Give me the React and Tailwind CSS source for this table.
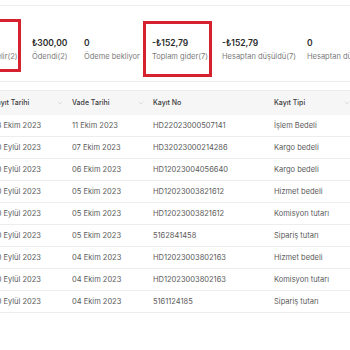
import React from "react";
import { ChevronDown } from "lucide-react";

const stats = [
  { v: "₺300,00", l: "Toplam gelir(2)" },
  { v: "₺300,00", l: "Ödendi(2)" },
  { v: "0", l: "Ödeme bekliyor" },
  { v: "-₺152,79", l: "Toplam gider(7)" },
  { v: "-₺152,79", l: "Hesaptan düşüldü(7)" },
  { v: "0", l: "Hesaptan düşülecek(0)" },
];

const rows = [
  ["08 Ekim 2023", "11 Ekim 2023", "HD22023000507141", "İşlem Bedeli"],
  ["30 Eylül 2023", "07 Ekim 2023", "HD32023000214286", "Kargo bedeli"],
  ["30 Eylül 2023", "06 Ekim 2023", "HD12023004056640", "Kargo bedeli"],
  ["30 Eylül 2023", "05 Ekim 2023", "HD12023003821612", "Hizmet bedeli"],
  ["30 Eylül 2023", "05 Ekim 2023", "HD12023003821612", "Komisyon tutarı"],
  ["30 Eylül 2023", "05 Ekim 2023", "5162841458", "Sipariş tutarı"],
  ["30 Eylül 2023", "04 Ekim 2023", "HD12023003802163", "Hizmet bedeli"],
  ["30 Eylül 2023", "04 Ekim 2023", "HD12023003802163", "Komisyon tutarı"],
  ["30 Eylül 2023", "04 Ekim 2023", "5161124185", "Sipariş tutarı"],
];

const headers = [
  { t: "Kayıt Tarihi", c: true },
  { t: "Vade Tarihi", c: true },
  { t: "Kayıt No", c: false },
  { t: "Kayıt Tipi", c: true },
];

export default function App() {
  return (
    <div
      className="relative w-[350px] h-[350px] overflow-hidden bg-white"
      style={{ fontFamily: "Inter, 'Noto Sans', sans-serif" }}
    >
      <div className="mt-[5px] h-[77px] border-y border-[#ececec] pt-[31px]">
        <div className="grid grid-cols-[68px_52px_68px_70px_85px_80px] -ml-[36px] whitespace-nowrap">
          {stats.map((s, i) => (
            <div key={i} className="flex flex-col gap-[2px]">
              <div className="text-[8.5px] leading-[12px] font-semibold text-[#2b2b2b]">{s.v}</div>
              <div className="text-[7.5px] leading-[12px] text-[#7a7a7a]">{s.l}</div>
            </div>
          ))}
        </div>
      </div>

      <div className="mt-[8px] -ml-[16px] w-[367px]">
        <div className="grid grid-cols-[80px_81px_121px_85px] h-[25px] border-t border-[#ececec] bg-[#f6f6f7] items-center">
          {headers.map((h, i) => (
            <div key={i} className="flex items-center justify-between pl-[8px] whitespace-nowrap">
              <span className="text-[7px] font-medium text-[#3a3a3a]">{h.t}</span>
              {h.c ? <ChevronDown size={8} strokeWidth={1.5} color="#c4c4c4" /> : null}
            </div>
          ))}
        </div>
        {rows.map((r, i) => (
          <div
            key={i}
            className="grid grid-cols-[80px_81px_121px_85px] h-[22px] border-b border-[#ededed] items-center"
          >
            {r.map((c, j) => (
              <div key={j} className="pl-[8px] whitespace-nowrap text-[7.5px] text-[#5a5a5a]">
                {c}
              </div>
            ))}
          </div>
        ))}
      </div>

      <div className="absolute left-[-10px] top-[19px] w-[31px] h-[53px] border-[3px] border-[#d6222e]" />
      <div className="absolute left-[143px] top-[21px] w-[69px] h-[56px] border-[3px] border-[#d6222e]" />
    </div>
  );
}
